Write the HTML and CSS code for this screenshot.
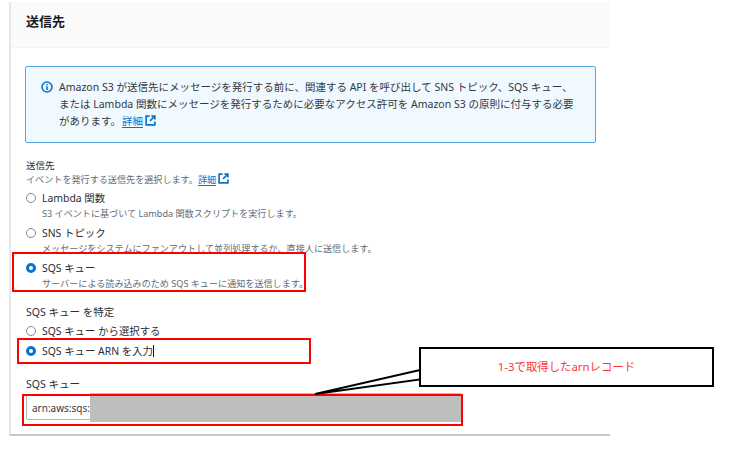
FILE: index.html
```html
<!DOCTYPE html>
<html lang="ja">
<head>
<meta charset="utf-8">
<title>送信先</title>
<link rel="stylesheet" href="styles.css">
</head>
<body>
<main class="stage">
  <section class="panel">
    <header class="panel-head"><h2>送信先</h2></header>
    <div class="panel-body">
      <div class="alert">
        <svg class="alert-icon" viewBox="0 0 12 12" width="12" height="12"><circle cx="6" cy="6" r="5" fill="none" stroke="#0972d3" stroke-width="1.6"/><path d="M6 5.2V9M6 3v1.3" stroke="#0972d3" stroke-width="1.6" fill="none"/></svg>
        <p>Amazon S3 が送信先にメッセージを発行する前に、関連する API を呼び出して SNS トピック、SQS キュー、<br>または Lambda 関数にメッセージを発行するために必要なアクセス許可を Amazon S3 の原則に付与する必要<br>があります。<a href="#">詳細</a><svg class="ext" viewBox="0 0 12 12" width="11" height="11"><path d="M5 1.2H1.2v9.6h9.6V7M7 1.2h3.8V5M10.6 1.4 5.5 6.5" fill="none" stroke="#0972d3" stroke-width="1.8"/></svg></p>
      </div>

      <div class="group group-dest">
        <div class="label label-small">送信先</div>
        <div class="desc">イベントを発行する送信先を選択します。<a class="link-tight" href="#">詳細</a><svg class="ext" viewBox="0 0 12 12" width="11" height="11"><path d="M5 1.2H1.2v9.6h9.6V7M7 1.2h3.8V5M10.6 1.4 5.5 6.5" fill="none" stroke="#0972d3" stroke-width="1.8"/></svg></div>
        <div class="option">
          <span class="radio"></span>
          <div><div class="opt-title">Lambda 関数</div><div class="desc">S3 イベントに基づいて Lambda 関数スクリプトを実行します。</div></div>
        </div>
        <div class="option">
          <span class="radio"></span>
          <div><div class="opt-title">SNS トピック</div><div class="desc">メッセージをシステムにファンアウトして並列処理するか、直接人に送信します。</div></div>
        </div>
        <div class="option">
          <span class="radio on"></span>
          <div><div class="opt-title">SQS キュー</div><div class="desc">サーバーによる読み込みのため SQS キューに通知を送信します。</div></div>
        </div>
      </div>

      <div class="group group-kind">
        <div class="label">SQS キュー を特定</div>
        <div class="option compact"><span class="radio"></span><div class="opt-title">SQS キュー から選択する</div></div>
        <div class="option compact"><span class="radio on"></span><div class="opt-title">SQS キュー ARN を入力<span class="caret"></span></div></div>
      </div>

      <div class="group group-input">
        <div class="label">SQS キュー</div>
        <div class="input">arn:aws:sqs:</div>
      </div>
    </div>
  </section>

  <div class="mask"></div>
  <div class="mark mark-sqs"></div>
  <div class="mark mark-arn"></div>
  <div class="mark mark-input"></div>
  <svg class="tail" viewBox="0 0 110 30" width="110" height="30"><path d="M0 27 105 3V12.500L0 27" fill="#fff" stroke="#000" stroke-width="2"/></svg>
  <div class="callout">1-3で取得したarnレコード</div>
</main>
</body>
</html>
```
FILE: styles.css
```css
* { box-sizing: border-box; }
html, body { margin: 0; background: #fff; }
body {
  font-family: "Noto Sans", "Noto Sans CJK JP", sans-serif;
  font-size: 11px;
  color: #16191f;
}
.stage { position: relative; width: 735px; height: 474px; overflow: hidden; padding: 2px 0 0 9px; }
.panel {
  width: 601px;
  height: 434px;
  border-left: 2px solid #e6e6e6;
  border-bottom: 2px solid #c3c8c8;
}
.panel-head {
  height: 46px;
  background: #fafafa;
  border-bottom: 1px solid #f2f2f2;
  padding: 10px 15px;
}
.panel-head h2 { margin: 0; font-size: 13px; line-height: 19px; font-weight: 700; }
.panel-body { padding: 18px 14px 0; }
.alert {
  display: flex;
  gap: 6px;
  width: 571px;
  height: 77px;
  padding: 12px 15px;
  background: #f0f9ff;
  border: 1px solid #5ba7dd;
  border-radius: 2px;
}
.alert-icon { flex: none; margin-top: 2px; }
.alert p { margin: 0; line-height: 17px; font-size: 10.5px; color: #33383e; white-space: nowrap; }
a { color: #0972d3; text-decoration: underline; text-underline-offset: 2px; margin-left: 1px; }
.link-tight { margin-left: 0; }
.ext { margin-left: 2px; vertical-align: -1px; }
.group { margin-left: 1px; }
.group-dest { margin-top: 15px; }
.group-kind { margin-top: 13px; }
.group-input { margin-top: 15px; }
.label { font-size: 10.5px; line-height: 15px; color: #2a2e33; }
.label-small { font-size: 9.5px; }
.desc { font-size: 9.1px; line-height: 14px; color: #5f6b7a; white-space: nowrap; }
.option { display: flex; gap: 6px; height: 35px; padding-top: 3px; }
.option.compact { height: 20px; padding-top: 1px; }
.group-kind .label { margin-bottom: 2px; }
.opt-title { font-size: 10.4px; line-height: 17px; color: #2a2e33; white-space: nowrap; }
.radio {
  flex: none;
  width: 10px;
  height: 10px;
  margin-top: 3px;
  border: 1px solid #7d8998;
  border-radius: 50%;
  background: #fff;
}
.radio.on { border: 3px solid #0972d3; }
.caret { display: inline-block; width: 1px; height: 12px; background: #16191f; vertical-align: -2px; }
.input {
  width: 436px;
  height: 25px;
  margin-top: 3px;
  padding: 0 5px;
  line-height: 25px;
  font-size: 10px;
  color: #33383e;
  background: #fff;
  border: 1px solid #aab7b8;
  border-radius: 2px;
}
.mask { position: absolute; left: 90px; top: 393px; width: 371px; height: 29px; background: #bebebe; }
.mark { position: absolute; border: 2px solid #f00; }
.mark-sqs { left: 12px; top: 252px; width: 294px; height: 40px; }
.mark-arn { left: 17px; top: 338px; width: 294px; height: 26px; }
.mark-input { left: 22px; top: 394px; width: 441px; height: 32px; }
.tail { position: absolute; left: 315px; top: 367px; }
.callout {
  position: absolute;
  left: 419px;
  top: 347px;
  width: 295px;
  height: 40px;
  border: 2px solid #000;
  background: #fff;
  color: #f8373c;
  font-size: 11.4px;
  line-height: 36px;
  text-align: center;
}
```
